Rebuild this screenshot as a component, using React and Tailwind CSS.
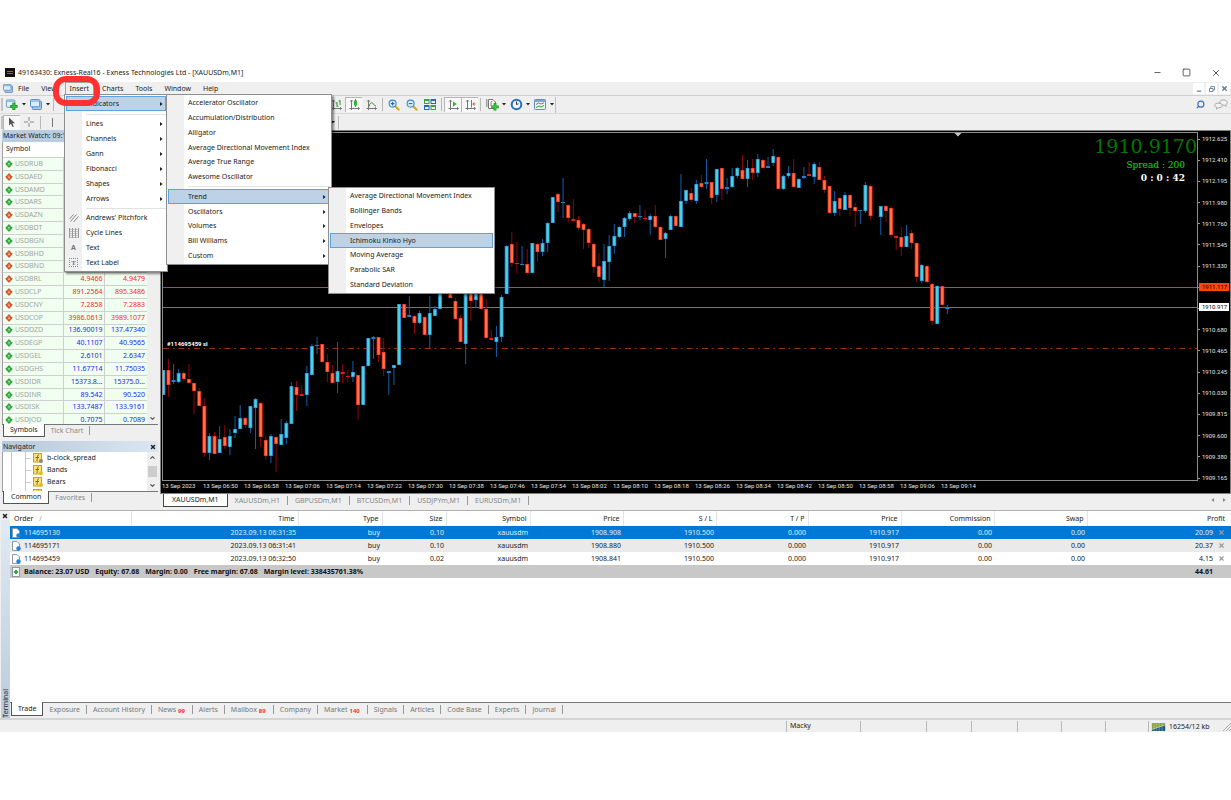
import { Minus, Square, X, Search, ChevronUp, ChevronDown } from 'lucide-react';
import clsx from 'clsx';

// direction, high, body top, body bottom, low
const CANDLES = [
    ['u', 370, 370, 395, 395], ['d', 359, 370, 385, 397], ['u', 364, 380, 382, 384], ['u', 369, 373, 382, 383],
    ['d', 371, 373, 379, 382], ['d', 364, 379, 383, 383], ['d', 383, 383, 391, 414], ['d', 388, 391, 406, 406],
    ['d', 398, 406, 453, 457], ['u', 433, 436, 453, 460], ['d', 432, 436, 454, 454], ['u', 426, 439, 453, 453],
    ['d', 425, 437, 446, 449], ['u', 429, 436, 447, 455], ['u', 416, 429, 433, 438], ['u', 405, 418, 429, 429],
    ['d', 417, 418, 425, 428], ['u', 406, 406, 428, 433], ['u', 398, 399, 408, 449], ['d', 402, 403, 437, 447],
    ['d', 436, 440, 456, 460], ['u', 434, 436, 456, 463], ['d', 436, 437, 444, 472], ['u', 419, 434, 445, 445],
    ['u', 421, 423, 438, 444], ['u', 382, 386, 424, 424], ['d', 381, 387, 395, 411], ['d', 385, 394, 396, 396],
    ['u', 366, 373, 395, 406], ['u', 344, 346, 375, 375], ['u', 337, 345, 346, 354], ['d', 344, 344, 362, 363],
    ['d', 354, 362, 372, 382], ['d', 365, 373, 383, 383], ['u', 342, 371, 382, 393], ['d', 364, 372, 374, 383],
    ['d', 370, 376, 377, 382], ['u', 361, 372, 377, 382], ['d', 375, 375, 405, 420], ['u', 366, 366, 405, 405],
    ['u', 338, 338, 366, 366], ['u', 336, 337, 339, 359], ['d', 337, 337, 355, 362], ['d', 338, 352, 369, 376],
    ['u', 371, 371, 373, 395], ['u', 365, 365, 368, 385], ['u', 304, 304, 365, 365], ['d', 304, 304, 318, 318],
    ['u', 296, 315, 317, 317], ['d', 315, 316, 323, 334], ['u', 311, 313, 323, 324], ['d', 316, 317, 335, 335],
    ['u', 296, 313, 335, 348], ['u', 306, 309, 316, 316], ['u', 285, 285, 309, 309], ['d', 275, 275, 290, 290],
    ['d', 280, 280, 298, 298], ['d', 298, 301, 319, 319], ['d', 315, 318, 342, 342], ['u', 290, 290, 344, 364],
    ['d', 285, 285, 301, 321], ['u', 285, 285, 300, 308], ['d', 285, 285, 309, 310], ['d', 299, 309, 338, 339],
    ['d', 330, 338, 340, 340], ['u', 326, 337, 342, 357], ['u', 295, 297, 337, 342], ['u', 245, 246, 294, 294],
    ['d', 232, 244, 263, 267], ['d', 242, 263, 264, 273], ['u', 246, 264, 265, 265], ['d', 249, 264, 273, 275],
    ['u', 243, 243, 273, 273], ['d', 243, 244, 252, 262], ['u', 239, 243, 252, 256], ['u', 222, 223, 243, 252],
    ['u', 197, 197, 223, 223], ['d', 193, 194, 202, 212], ['u', 178, 202, 203, 218], ['d', 204, 205, 218, 222],
    ['d', 199, 219, 221, 221], ['d', 216, 220, 228, 230], ['d', 223, 224, 230, 249], ['d', 228, 229, 243, 248],
    ['d', 243, 244, 267, 273], ['d', 253, 266, 277, 282], ['u', 244, 261, 280, 287], ['u', 235, 246, 262, 281],
    ['u', 224, 236, 246, 254], ['u', 226, 227, 237, 238], ['u', 217, 218, 227, 237], ['u', 211, 213, 219, 221],
    ['d', 213, 213, 217, 223], ['u', 205, 216, 217, 220], ['d', 210, 218, 219, 221], ['u', 214, 216, 220, 235],
    ['d', 205, 216, 227, 228], ['d', 226, 227, 240, 240], ['u', 232, 233, 239, 258], ['u', 215, 216, 230, 230],
    ['d', 215, 216, 226, 226], ['u', 174, 201, 227, 227], ['u', 190, 190, 201, 204], ['d', 188, 193, 200, 202],
    ['u', 180, 184, 201, 204], ['d', 175, 183, 187, 188], ['u', 159, 182, 184, 189], ['d', 182, 182, 198, 204],
    ['u', 169, 169, 195, 202], ['d', 168, 168, 189, 200], ['u', 178, 187, 189, 194], ['u', 168, 176, 187, 188],
    ['u', 167, 168, 176, 178], ['d', 155, 170, 179, 179], ['u', 160, 168, 179, 187], ['d', 159, 168, 173, 180],
    ['u', 154, 159, 173, 177], ['d', 159, 160, 168, 169], ['u', 157, 166, 168, 168], ['u', 149, 156, 163, 166],
    ['d', 156, 157, 189, 189], ['u', 175, 176, 189, 190], ['u', 166, 173, 176, 178], ['d', 159, 173, 187, 188],
    ['u', 178, 179, 188, 188], ['u', 167, 176, 178, 179], ['d', 162, 174, 176, 176], ['u', 162, 164, 177, 184],
    ['d', 162, 167, 180, 180], ['d', 176, 180, 190, 193], ['d', 186, 186, 213, 214], ['u', 191, 201, 213, 216],
    ['d', 197, 198, 209, 216], ['u', 192, 195, 210, 210], ['d', 194, 195, 208, 216], ['d', 203, 207, 211, 227],
    ['u', 210, 210, 211, 224], ['u', 182, 185, 211, 213], ['d', 185, 186, 216, 220], null,
    ['u', 206, 206, 217, 235], ['d', 205, 206, 211, 222], ['d', 206, 208, 235, 237], ['d', 235, 236, 238, 250],
    ['d', 227, 237, 247, 256], ['u', 225, 236, 247, 247], ['d', 230, 233, 243, 249], ['d', 242, 243, 277, 282],
    ['u', 264, 265, 281, 283], ['d', 265, 266, 282, 283], ['d', 283, 284, 321, 325], ['u', 285, 286, 324, 324],
    ['d', 286, 286, 305, 306], ['u', 305, 307, 309, 314],
];

const SYMBOLS = [
    ['USDRUB', 'up'], ['USDAED', 'down'], ['USDAMD', 'up'], ['USDARS', 'up'], ['USDAZN', 'down'],
    ['USDBDT', 'up'], ['USDBGN', 'up'], ['USDBHD', 'down'], ['USDBND', 'down'],
    ['USDBRL', 'down', '4.9466', '4.9479'],
    ['USDCLP', 'down', '891.2564', '895.3486'],
    ['USDCNY', 'down', '7.2858', '7.2883'],
    ['USDCOP', 'down', '3986.0613', '3989.1077'],
    ['USDDZD', 'up', '136.90019', '137.47340'],
    ['USDEGP', 'up', '40.1107', '40.9565'],
    ['USDGEL', 'up', '2.6101', '2.6347'],
    ['USDGHS', 'up', '11.67714', '11.75035'],
    ['USDIDR', 'up', '15373.8...', '15375.0...'],
    ['USDINR', 'up', '89.542', '90.520'],
    ['USDISK', 'up', '133.7487', '133.9161'],
    ['USDJOD', 'up', '0.7075', '0.7089'],
];

const PRICES = [
    '1912.625', '1912.410', '1912.195', '1911.980', '1911.760', '1911.545', '1911.330', '', '',
    '1910.680', '1910.465', '1910.245', '1910.030', '1909.815', '1909.600', '1909.380', '1909.165',
];

const TIMES = [
    '13 Sep 2023', '13 Sep 06:50', '13 Sep 06:58', '13 Sep 07:06', '13 Sep 07:14', '13 Sep 07:22', '13 Sep 07:30',
    '13 Sep 07:38', '13 Sep 07:46', '13 Sep 07:54', '13 Sep 08:02', '13 Sep 08:10', '13 Sep 08:18', '13 Sep 08:26',
    '13 Sep 08:34', '13 Sep 08:42', '13 Sep 08:50', '13 Sep 08:58', '13 Sep 09:06', '13 Sep 09:14',
];

const ORDERS = [
    ['114695130', '2023.09.13 06:31:35', 'buy', '0.10', 'xauusdm', '1908.908', '1910.500', '0.000', '1910.917', '0.00', '0.00', '20.09'],
    ['114695171', '2023.09.13 06:31:41', 'buy', '0.10', 'xauusdm', '1908.880', '1910.500', '0.000', '1910.917', '0.00', '0.00', '20.37'],
    ['114695459', '2023.09.13 06:32:50', 'buy', '0.02', 'xauusdm', '1908.841', '1910.500', '0.000', '1910.917', '0.00', '0.00', '4.15'],
];

const ORDER_HEADS = ['Time', 'Type', 'Size', 'Symbol', 'Price', 'S / L', 'T / P', 'Price', 'Commission', 'Swap'];

const TERMINAL_TABS = [
    ['Exposure'], ['Account History'], ['News', '99'], ['Alerts'], ['Mailbox', '89'], ['Company'], ['Market', '140'],
    ['Signals'], ['Articles'], ['Code Base'], ['Experts'], ['Journal'],
];

function Arrow({ className }) {
    return (
        <svg className={className} width="3" height="4" viewBox="0 0 3 4">
            <path d="M0 0L2.6 2L0 4Z" fill="currentColor" />
        </svg>
    );
}

function DropMark() {
    return (
        <svg width="4" height="3" viewBox="0 0 4 3" className="mx-px">
            <path d="M0 0H4L2 2.6Z" fill="#222" />
        </svg>
    );
}

function Diamond({ up }) {
    return (
        <svg width="8" height="8" viewBox="0 0 8 8" className="shrink-0">
            <path
                d="M4 .6L5.6 2.3L7.3 4L5.6 5.7L4 7.4L2.4 5.7L.7 4L2.4 2.3Z"
                fill={up ? '#2fb03c' : '#e4562c'}
                stroke={up ? '#1d7a28' : '#a8341a'}
                strokeWidth=".7"
                strokeLinejoin="round"
            />
            <path d={up ? 'M4 2.6L5.2 4H4.4V5.4H3.6V4H2.8Z' : 'M4 5.4L5.2 4H4.4V2.6H3.6V4H2.8Z'} fill={up ? '#a4eba8' : '#ffc0a0'} />
        </svg>
    );
}

function Divider() {
    return <span className="mx-[2px] h-[13px] w-px bg-[#b8b8b8]" />;
}

function Handle() {
    return <span className="ml-px h-[13px] w-[2px] border-x border-[#c4c4c4]" />;
}

function ToolButton({ label, pressed, children }) {
    return (
        <button
            type="button"
            aria-label={label}
            className={clsx(
                'flex h-[15px] items-center justify-center',
                pressed ? 'w-[17px] border-t border-l border-[#b5b5b5] bg-[#f8f8f8]' : 'w-[18px]',
            )}
        >
            {children}
        </button>
    );
}

function Axes({ children }) {
    return (
        <svg width="11" height="12" viewBox="0 0 11 12" fill="none" stroke="#777" strokeWidth="1">
            <path d="M2.5 1V11M.5 9.5H10.5M1.2 2.6L2.5 1L3.8 2.6M9 8.2L10.5 9.5L9 10.8" />
            {children}
        </svg>
    );
}

function Zoomer({ plus }) {
    return (
        <svg width="12" height="12" viewBox="0 0 13 13" fill="none">
            <path d="M7.6 7.6L11.4 11.4" stroke="#d9a520" strokeWidth="2.4" strokeLinecap="round" />
            <circle cx="5" cy="5" r="3.8" fill="#dff0fc" stroke="#3d8fce" strokeWidth="1.2" />
            <path d={plus ? 'M3 5H7M5 3V7' : 'M3 5H7'} stroke="#2468a8" strokeWidth="1.2" />
        </svg>
    );
}

function WindowsIcon({ size = 12 }) {
    return (
        <svg width={size} height={size - 1} viewBox="0 0 13 12">
            <rect x="2.5" y="2.5" width="10" height="9" rx="1" fill="#a9c8e6" stroke="#4d86bd" />
            <rect x=".5" y=".5" width="10" height="8" rx="1" fill="#dceafa" stroke="#4d86bd" />
            <path d="M1 2.2H10" stroke="#7fb0df" strokeWidth="1.4" />
        </svg>
    );
}

function NewChartIcon() {
    return (
        <svg width="12" height="12" viewBox="0 0 13 12">
            <rect x=".5" y=".5" width="9" height="8" rx=".8" fill="#e6f1fb" stroke="#5d92c4" />
            <path d="M1 2H9" stroke="#8ab8e2" strokeWidth="1.4" />
            <path d="M8.5 3.5V11.5M4.5 7.5H12.5" stroke="#178a1e" strokeWidth="3.2" />
            <path d="M8.5 4.2V10.8M5.2 7.5H11.8" stroke="#35c53e" strokeWidth="1.6" />
        </svg>
    );
}

function MenuItem({ label, arrow, active, icon }) {
    return (
        <button
            type="button"
            className={clsx(
                'flex min-h-0 flex-1 items-center text-left whitespace-nowrap',
                active ? 'border border-[#5aa2e2] bg-[#bdd2e4]' : 'border border-transparent',
            )}
        >
            <span className="flex w-[19px] shrink-0 items-center pl-[2px] text-[#777]">{icon}</span>
            <span className="flex-1">{label}</span>
            {arrow && <Arrow className="mr-[2px]" />}
        </button>
    );
}

function MenuRule() {
    return <div className="my-[2px] ml-[20px] h-px bg-[#e2e2e2]" />;
}

const MENU_BOX = 'absolute flex flex-col border border-[#8e8e8e] p-px text-[#222] shadow-[2px_2px_2px_rgba(0,0,0,0.45)]';

function InsertMenu() {
    return (
        <div className={clsx(MENU_BOX, 'top-[28px] left-[64px] h-[178px] w-[104px] bg-linear-to-r from-[#f0f0f0] from-[17px] to-white to-[17px]')}>
            <div className="flex h-[15px] flex-col">
                <MenuItem label="Indicators" arrow active />
            </div>
            <div className="pt-px">
                <MenuRule />
            </div>
            <div className="flex h-[89px] flex-col">
                <MenuItem label="Lines" arrow />
                <MenuItem label="Channels" arrow />
                <MenuItem label="Gann" arrow />
                <MenuItem label="Fibonacci" arrow />
                <MenuItem label="Shapes" arrow />
                <MenuItem label="Arrows" arrow />
            </div>
            <MenuRule />
            <div className="flex flex-1 flex-col">
                <MenuItem
                    label="Andrews' Pitchfork"
                    icon={
                        <svg width="10" height="10" viewBox="0 0 10 10" stroke="#888" fill="none">
                            <path d="M.5 6L4.5 1.5M1.5 8.5L7.5 1.5M4.5 9L9.5 3.5" />
                        </svg>
                    }
                />
                <MenuItem
                    label="Cycle Lines"
                    icon={
                        <svg width="10" height="10" viewBox="0 0 10 10" stroke="#999" fill="none">
                            <path d="M.5 0V10M3.5 0V10M6.5 0V10M9.5 0V10" />
                            <path d="M0 1.5H10M0 3.5H10M0 5.5H10M0 7.5H10M0 9.5H10" strokeWidth=".5" />
                        </svg>
                    }
                />
                <MenuItem label="Text" icon={<span className="w-[9px] text-center font-bold">A</span>} />
                <MenuItem
                    label="Text Label"
                    icon={<span className="flex h-[9px] w-[9px] items-center justify-center border border-dotted border-[#888] font-['Liberation_Serif',serif] font-bold">T</span>}
                />
            </div>
        </div>
    );
}

function IndicatorsMenu() {
    return (
        <div className={clsx(MENU_BOX, 'top-[28px] left-[166px] h-[171px] w-[166px] bg-linear-to-r from-[#f0f0f0] from-[17px] to-white to-[17px]')}>
            <div className="flex h-[89px] flex-col">
                <MenuItem label="Accelerator Oscillator" />
                <MenuItem label="Accumulation/Distribution" />
                <MenuItem label="Alligator" />
                <MenuItem label="Average Directional Movement Index" />
                <MenuItem label="Average True Range" />
                <MenuItem label="Awesome Oscillator" />
            </div>
            <MenuRule />
            <div className="flex h-[74px] flex-col pr-px">
                <MenuItem label="Trend" arrow active />
                <MenuItem label="Oscillators" arrow />
                <MenuItem label="Volumes" arrow />
                <MenuItem label="Bill Williams" arrow />
                <MenuItem label="Custom" arrow />
            </div>
        </div>
    );
}

function TrendMenu() {
    return (
        <div className={clsx(MENU_BOX, 'top-[121px] left-[328px] h-[107px] w-[167px] bg-linear-to-r from-[#f0f0f0] from-[17px] to-white to-[17px]')}>
            <MenuItem label="Average Directional Movement Index" />
            <MenuItem label="Bollinger Bands" />
            <MenuItem label="Envelopes" />
            <MenuItem label="Ichimoku Kinko Hyo" active />
            <MenuItem label="Moving Average" />
            <MenuItem label="Parabolic SAR" />
            <MenuItem label="Standard Deviation" />
        </div>
    );
}

function TitleBar() {
    return (
        <header className="flex h-4 items-center bg-white pb-[3px] pl-[5px] text-[#222]">
            <svg width="10" height="9" viewBox="0 0 10 9" className="mr-[3px]">
                <rect width="10" height="9" fill="#111" />
                <path d="M2 3.5H8M2 5.5H8" stroke="#a89018" strokeWidth=".8" />
            </svg>
            <h1 className="flex-1">49163430: Exness-Real16 - Exness Technologies Ltd - [XAUUSDm,M1]</h1>
            <div className="flex items-center gap-[20px] pr-[10px] text-[#333]">
                <button type="button" aria-label="Minimize"><Minus size={9} strokeWidth={2} /></button>
                <button type="button" aria-label="Maximize"><Square size={9} strokeWidth={2} /></button>
                <button type="button" aria-label="Close"><X size={10} strokeWidth={2} /></button>
            </div>
        </header>
    );
}

function MenuBar() {
    return (
        <nav className="flex h-[14px] items-center gap-3 border-b border-[#d0d0d0] pl-[3px] text-[#222]">
            <span className="-mr-[7px]"><WindowsIcon size={10} /></span>
            <button type="button">File</button>
            <button type="button">View</button>
            <button type="button" className="-mx-[4px] h-[14px] border-x border-t border-[#a0a0a0] px-[4px]">Insert</button>
            <button type="button">Charts</button>
            <button type="button">Tools</button>
            <button type="button">Window</button>
            <button type="button">Help</button>
            <div className="ml-auto flex gap-[2px] pr-[1px] text-[#6a7f95]">
                <button type="button" aria-label="Minimize chart" className="flex h-[11px] w-[11px] items-end justify-center bg-white"><Minus size={6} strokeWidth={5} /></button>
                <button type="button" aria-label="Restore chart" className="flex h-[11px] w-[11px] items-center justify-center bg-white">
                    <svg width="6" height="6" viewBox="0 0 6 6" fill="none" stroke="currentColor" strokeWidth=".9">
                        <path d="M.5 2.5H4V5.5H.5ZM1.8 2.5V.6H5.5V4H4" />
                    </svg>
                </button>
                <button type="button" aria-label="Close chart" className="flex h-[11px] w-[11px] items-center justify-center bg-white"><X size={7} strokeWidth={5} /></button>
            </div>
        </nav>
    );
}

function Toolbars() {
    return (
        <div>
            <div className="flex h-[17px] items-center">
                <Handle />
                <ToolButton label="New chart"><NewChartIcon /></ToolButton>
                <DropMark />
                <ToolButton label="Profiles"><WindowsIcon /></ToolButton>
                <DropMark />
                <Divider />
                <div className="w-[271px]" />
                <ToolButton label="Bar chart">
                    <Axes><path d="M6 3V8M6 4H4.6M6 7H7.4M9 1V6M9 2H7.6" stroke="#2a9a33" /></Axes>
                </ToolButton>
                <ToolButton label="Candlesticks" pressed>
                    <Axes><path d="M6.5 0V8" stroke="#2a9a33" /><rect x="5" y="1.5" width="3" height="5" fill="#30b83a" stroke="none" /></Axes>
                </ToolButton>
                <ToolButton label="Line chart">
                    <Axes><path d="M3 7.5C4 3.5 6 3 7 4.5S8.5 6.5 10 7" stroke="#2a9a33" /></Axes>
                </ToolButton>
                <Divider />
                <ToolButton label="Zoom in"><Zoomer plus /></ToolButton>
                <ToolButton label="Zoom out"><Zoomer /></ToolButton>
                <ToolButton label="Tile windows">
                    <svg width="12" height="11" viewBox="0 0 12 11">
                        <path d="M0 0H5.5V5H0ZM6.5 6H12V11H6.5Z" fill="#3fa047" />
                        <path d="M6.5 0H12V5H6.5ZM0 6H5.5V11H0Z" fill="#2f66b8" />
                        <path d="M1 3H4.5M7.5 3H11M1 9H4.5M7.5 9H11" stroke="#e8f4ff" strokeWidth="1.8" />
                    </svg>
                </ToolButton>
                <Divider />
                <ToolButton label="Auto scroll" pressed>
                    <Axes><path d="M5 2.5L9 5L5 7.5Z" fill="#30b83a" stroke="none" /></Axes>
                </ToolButton>
                <ToolButton label="Chart shift" pressed>
                    <Axes><path d="M6.5 1V8.5" /><path d="M10.5 5H8M9.4 3.5L7.8 5L9.4 6.5" stroke="#c8501e" /></Axes>
                </ToolButton>
                <Divider />
                <ToolButton label="Indicators list">
                    <svg width="13" height="13" viewBox="0 0 13 13" fill="none">
                        <path d="M2.5 1.5H7L9.5 4V10.5H2.5Z" fill="#fff" stroke="#777" />
                        <path d="M.8 1V9M5 8V4.5Q5 3 6.5 3.4" stroke="#777" />
                        <path d="M9 5V12.5M5.3 8.8H12.7" stroke="#17941e" strokeWidth="2.8" />
                        <path d="M9 5.6V12M6 8.8H12" stroke="#3fd048" strokeWidth="1.2" />
                    </svg>
                </ToolButton>
                <DropMark />
                <ToolButton label="Periods">
                    <svg width="13" height="13" viewBox="0 0 13 13" fill="none">
                        <circle cx="6.5" cy="6.5" r="4.8" fill="#eef6fd" stroke="#2a6fb8" strokeWidth="2" />
                        <path d="M6.5 3.5V6.5L8.5 5.8" stroke="#335" />
                    </svg>
                </ToolButton>
                <DropMark />
                <ToolButton label="Templates">
                    <svg width="13" height="11" viewBox="0 0 13 11" fill="none">
                        <rect x=".5" y=".5" width="11" height="10" rx=".8" fill="#eaf3fb" stroke="#5d8fc0" />
                        <path d="M1 2H11" stroke="#5d8fc0" strokeWidth="1.5" />
                        <path d="M2 5.5L4.5 4L7 5L10 3.8" stroke="#c86030" />
                        <path d="M2 8.5L5 7L7 8L10 6.5" stroke="#3a9a48" />
                    </svg>
                </ToolButton>
                <DropMark />
                <span className="h-[16px] w-px bg-[#c0c0c0]" />
                <div className="ml-auto flex items-center gap-[9px] pr-[3px]">
                    <button type="button" aria-label="Search" className="-scale-x-100"><Search size={9} strokeWidth={3} color="#3a6cc8" /></button>
                    <button type="button" aria-label="Chat">
                        <svg width="14" height="11" viewBox="0 0 15 12" fill="#f2f2f2" stroke="#999" strokeWidth=".9">
                            <path d="M10 1C12.6 1 14.3 2.2 14.3 3.9C14.3 5 13.7 5.8 12.8 6.3L13.2 8L11.3 6.8C8 7 6 5.8 6 3.9C6 2.2 7.6 1 10 1Z" />
                            <path d="M4.8 4.5C7.2 4.5 8.8 5.5 8.8 7S7.2 9.6 4.6 9.5L2.6 11L2.9 9.2C1.4 8.7 .6 8 .6 7C.6 5.5 2.3 4.5 4.8 4.5Z" />
                        </svg>
                    </button>
                </div>
            </div>
            <div className="flex h-[17px] items-center border-t border-[#dadada]">
                <Handle />
                <ToolButton label="Cursor" pressed>
                    <svg width="8" height="11" viewBox="0 0 8 11">
                        <path d="M1 .5V8.5L3 6.8L4.5 10L5.8 9.4L4.4 6.3H7Z" fill="#555" />
                    </svg>
                </ToolButton>
                <ToolButton label="Crosshair">
                    <svg width="10" height="10" viewBox="0 0 10 10" stroke="#888">
                        <path d="M5 0V4M5 6V10M0 5H4M6 5H10" />
                    </svg>
                </ToolButton>
                <Divider />
                <ToolButton label="Vertical line"><span className="h-[9px] w-px bg-[#777]" /></ToolButton>
                <div className="w-[269px]" />
                <DropMark />
                <Divider />
            </div>
        </div>
    );
}

function MarketWatch() {
    return (
        <section>
            <h2 className="h-[12px] overflow-hidden bg-[#bacde0] pl-px leading-[12px] whitespace-nowrap text-[#222]">Market Watch: 09:13:17</h2>
            <div className="flex h-[282px] border-l border-[#a0a0a0]">
                <div className="min-w-0 flex-1 overflow-hidden bg-white">
                    <p className="h-[15px] pl-[3px] leading-[14px] text-[#222]">Symbol</p>
                    <table className="h-[269px] w-full table-fixed border-collapse">
                        <colgroup>
                            <col className="w-[60px]" />
                            <col className="w-[41px]" />
                            <col />
                        </colgroup>
                        <tbody>
                            {SYMBOLS.map(([name, dir, bid, ask]) => (
                                <tr key={name} className="border-t border-[#cfcfcf] bg-[#f0fff0] leading-[10px]">
                                    <td className="p-0 pl-[2px]">
                                        <span className="flex items-center gap-[2px] text-[#a4a4a4]">
                                            <Diamond up={dir === 'up'} />
                                            {name}
                                        </span>
                                    </td>
                                    <td className={clsx('border-l border-[#cfcfcf] p-0 pr-px text-right', dir === 'up' ? 'text-[#2222ff]' : 'text-[#ff2222]')}>{bid}</td>
                                    <td className={clsx('border-l border-[#cfcfcf] p-0 pr-[2px] text-right', dir === 'up' ? 'text-[#2222ff]' : 'text-[#ff2222]')}>{ask}</td>
                                </tr>
                            ))}
                        </tbody>
                    </table>
                </div>
                <div className="flex w-[11px] items-end justify-center bg-[#efefef] pb-[2px]">
                    <ChevronDown size={7} strokeWidth={4} color="#555" />
                </div>
            </div>
            <div className="flex h-[17px] items-start border-t border-[#777]">
                <button type="button" className="-mt-px ml-px h-[13px] border-x border-b border-[#555] bg-white px-[6px] leading-[12px] text-[#222]">Symbols</button>
                <button type="button" className="mt-px border-r border-[#999] px-[6px] leading-[9px] text-[#888]">Tick Chart</button>
            </div>
        </section>
    );
}

function Navigator() {
    return (
        <section>
            <div className="flex h-[11px] items-center justify-between bg-linear-to-r from-[#b4c8dc] to-[#dce6f2] pr-[2px] pl-px">
                <h2 className="text-[#222]">Navigator</h2>
                <button type="button" aria-label="Close navigator"><X size={6} strokeWidth={6} color="#222" /></button>
            </div>
            <div className="flex h-[39px] border-l border-[#a0a0a0] bg-white">
                <ul className="min-w-0 flex-1 overflow-hidden">
                    {['b-clock_spread', 'Bands', 'Bears', ''].map((name, i) => (
                        <li key={i} className="flex h-[12px] items-center gap-px text-[#222]">
                            <svg width="43" height="12" viewBox="0 0 43 12" fill="none">
                                <path d="M8.5 0V12M22.5 0V12M22.5 6.5H28" stroke="#c8c8c8" />
                                <rect x="30.5" y="1.5" width="8" height="8.5" fill="#f8e27c" stroke="#c8a020" />
                                <path d="M36 3C34.5 2.5 34.5 4 34 9M32.5 5.5H36" stroke="#8a6a10" />
                                <circle cx="38" cy="9" r="2" fill={i === 0 ? '#888' : '#e8b820'} />
                            </svg>
                            {name}
                        </li>
                    ))}
                </ul>
                <div className="flex w-[11px] flex-col items-center justify-between bg-[#efefef] py-[2px]">
                    <ChevronUp size={7} strokeWidth={4} color="#555" />
                    <span className="h-[11px] w-[9px] bg-[#cdcdcd]" />
                    <ChevronDown size={7} strokeWidth={4} color="#555" />
                </div>
            </div>
            <div className="flex h-[14px] items-start border-t border-[#777]">
                <button type="button" className="-mt-px ml-px h-[13px] border-x border-b border-[#555] bg-white px-[7px] leading-[12px] text-[#222]">Common</button>
                <button type="button" className="mt-px border-r border-[#999] px-[6px] leading-[9px] text-[#888]">Favorites</button>
            </div>
        </section>
    );
}

function Candle({ index, candle }) {
    if (!candle) return null;
    const [dir, high, top, bottom, low] = candle;
    const x = 163.3 + index * 5.125;
    const up = dir === 'u';
    const h = Math.max(bottom - top, 1);
    return (
        <g>
            <rect x={x - 0.5} y={high} width="1" height={low - high} fill={up ? '#155fa8' : '#8e0808'} />
            <rect x={x - 2} y={top} width="4" height={h} fill={up ? '#1f7fd6' : '#e02010'} />
            {h > 2 && <rect x={x - 1.2} y={top + 0.5} width="2.4" height={h - 1} fill={up ? '#50d0d8' : '#ff7448'} />}
        </g>
    );
}

function Chart() {
    return (
        <div className="flex h-[364px] flex-col border border-[#808080] bg-black pt-px pl-px font-['Roboto',sans-serif] text-[6px] leading-[8px] text-[#e4e4e4]">
            <div className="flex h-[349px]">
                <div className="relative min-w-0 flex-1 border border-[#8c8c8c]">
                    <svg className="h-full w-full">
                        <g transform="translate(-163 -133)">
                            <rect x="163" y="287" width="2400" height="1" fill="#c84a10" />
                            <rect x="163" y="307" width="2400" height="1" fill="#757575" />
                            <path d="M163 348.5H2600" stroke="#9c3208" strokeDasharray="6 3.8 1.6 4" />
                            {CANDLES.map((candle, i) => <Candle key={i} index={i} candle={candle} />)}
                            <path d="M954.5 133H961.5L958 136.5Z" fill="#c8c8c8" />
                        </g>
                    </svg>
                    <span className="absolute top-[207px] left-[4px] font-bold text-white">#114695459 sl</span>
                    <div className="absolute top-0 right-0 text-right font-['DejaVu_Serif',serif]">
                        <p className="text-[19px] leading-[26px] text-[#007800]">1910.9170</p>
                        <p className="pr-[12px] text-[9px] leading-[13px] text-[#00e000]">Spread : 200</p>
                        <p className="pr-[12px] text-[9px] leading-[13px] font-bold text-white">0 : 0 : 42</p>
                    </div>
                </div>
                <div className="relative flex w-[32px] flex-col justify-between pt-[3px]">
                    {PRICES.map((price, i) => (
                        <span key={i} className="-mb-[1px] flex h-[8px] items-center gap-[2px]">
                            <span className="h-px w-[2px] bg-[#999]" />
                            {price}
                        </span>
                    ))}
                    <span className="absolute top-[151px] left-px w-[30px] bg-[#ff4500] pl-[3px] text-black">1911.117</span>
                    <span className="absolute top-[171px] left-px w-[30px] bg-white pl-[3px] text-black">1910.917</span>
                </div>
            </div>
            <div className="flex overflow-hidden pt-px whitespace-nowrap">
                {TIMES.map((time) => <span key={time} className="w-[41px] shrink-0">{time}</span>)}
            </div>
        </div>
    );
}

function ChartTabs() {
    return (
        <div className="flex h-[16px] items-start pl-[3px] text-[#888]">
            <button type="button" className="h-[13px] border-x border-b border-[#444] bg-white px-2 leading-[12px] text-[#222]">XAUUSDm,M1</button>
            {['XAUUSDm,H1', 'GBPUSDm,M1', 'BTCUSDm,M1', 'USDJPYm,M1', 'EURUSDm,M1'].map((name) => (
                <button key={name} type="button" className="mt-[2px] border-r border-[#999] px-[7px] leading-[9px]">{name}</button>
            ))}
            <div className="ml-auto flex gap-[9px] pt-[4px] pr-[5px] text-[#888]">
                <Arrow className="rotate-180" />
                <Arrow />
            </div>
        </div>
    );
}

function OrderIcon() {
    return (
        <svg width="9" height="10" viewBox="0 0 9 10" className="shrink-0">
            <path d="M.5 .5H5L7.5 3V9.5H.5Z" fill="#fff" stroke="#8b98a5" />
            <circle cx="6.5" cy="7.5" r="2.2" fill="#1c84d8" />
        </svg>
    );
}

function Terminal() {
    return (
        <section className="flex h-[208px] border-t border-[#b0b0b0]">
            <div className="flex w-[10px] flex-col items-center">
                <button type="button" aria-label="Close terminal" className="h-[9px]"><X size={6} strokeWidth={6} color="#222" /></button>
                <div className="flex w-[9px] flex-1 items-center bg-linear-to-b from-[#e0eaf4] to-[#bccbdb] [writing-mode:vertical-rl]">
                    <h2 className="mt-auto rotate-180 leading-[9px] text-[#222]">Terminal</h2>
                </div>
            </div>
            <div className="flex min-w-0 flex-1 flex-col">
                <div className="flex-1 bg-white">
                    <table className="w-full table-fixed border-collapse text-[#222]">
                        <colgroup>
                            <col className="w-[121px]" />
                            <col className="w-[167px]" />
                            <col className="w-[84px]" />
                            <col className="w-[64px]" />
                            <col className="w-[84px]" />
                            <col className="w-[93px]" />
                            <col className="w-[93px]" />
                            <col className="w-[92px]" />
                            <col className="w-[93px]" />
                            <col className="w-[93px]" />
                            <col className="w-[93px]" />
                            <col />
                        </colgroup>
                        <thead>
                            <tr className="h-[15px]">
                                <th className="border-r border-[#e4e4e4] p-0 pl-1 text-left font-normal">Order <span className="pl-1 text-[#999]">/</span></th>
                                {ORDER_HEADS.map((head, i) => (
                                    <th key={i} className="border-r border-[#e4e4e4] p-0 pr-[3px] text-right font-normal">{head}</th>
                                ))}
                                <th className="p-0 pr-[6px] text-right font-normal">Profit</th>
                            </tr>
                        </thead>
                        <tbody>
                            {ORDERS.map((cells, row) => (
                                <tr key={cells[0]} className={clsx('h-[13px] leading-[12px]', row === 0 && 'bg-[#0078d7] text-[#e0effc]', row === 1 && 'bg-[#eaeaea]')}>
                                    <td className="p-0 pl-[2px]">
                                        <span className="flex items-center gap-[3px]"><OrderIcon />{cells[0]}</span>
                                    </td>
                                    {cells.slice(1, 11).map((cell, i) => <td key={i} className="p-0 pr-[2px] text-right">{cell}</td>)}
                                    <td className="p-0 pr-[6px]">
                                        <span className="flex items-center justify-end gap-[5px]">
                                            {cells[11]}
                                            <button type="button" aria-label="Close order"><X size={7} strokeWidth={4} color="#999" /></button>
                                        </span>
                                    </td>
                                </tr>
                            ))}
                            <tr className="h-[13px] bg-[#c8c8c8] leading-[12px] font-bold text-[#111]">
                                <td colSpan={11} className="p-0 pl-[2px]">
                                    <span className="flex items-center gap-[3px]">
                                        <svg width="9" height="10" viewBox="0 0 9 10" className="shrink-0">
                                            <rect x=".5" y=".5" width="7" height="9" fill="#fff" stroke="#8b98a5" />
                                            <path d="M4 2.5L6.5 5L4 7.5L1.5 5Z" fill="#2fa03a" />
                                        </svg>
                                        <span className="flex gap-[6px]">
                                            <span>Balance: 23.07 USD</span>
                                            <span>Equity: 67.68</span>
                                            <span>Margin: 0.00</span>
                                            <span>Free margin: 67.68</span>
                                            <span>Margin level: 338435761.38%</span>
                                        </span>
                                    </span>
                                </td>
                                <td className="p-0 pr-[18px] text-right">44.61</td>
                            </tr>
                        </tbody>
                    </table>
                </div>
                <div className="flex h-[16px] items-start border-t border-[#777] text-[#777]">
                    <button type="button" className="-mt-px ml-px h-[14px] border-x border-b border-[#555] bg-white px-[6px] leading-[13px] text-[#222]">Trade</button>
                    {TERMINAL_TABS.map(([name, count]) => (
                        <button key={name} type="button" className="mt-[2px] flex border-r border-[#999] px-[6px] leading-[9px]">
                            {name}
                            {count && <span className="mr-px ml-[2px] pt-[4px] text-[6px] leading-[5px] font-bold text-[#ff3030]">{count}</span>}
                        </button>
                    ))}
                </div>
            </div>
        </section>
    );
}

function StatusBar() {
    return (
        <footer className="flex h-[14px] items-end justify-end border-t-2 border-[#d4d4d4] text-[#222]">
            <span className="h-[11px] w-[74px] border-l border-[#b8b8b8] pl-[3px] leading-[9px]">Macky</span>
            <span className="h-[11px] w-[66px] border-l border-[#b8b8b8]" />
            <span className="h-[11px] w-[45px] border-l border-[#b8b8b8]" />
            <span className="h-[11px] w-[46px] border-l border-[#b8b8b8]" />
            <span className="h-[11px] w-[44px] border-l border-[#b8b8b8]" />
            <span className="h-[11px] w-[44px] border-l border-[#b8b8b8]" />
            <span className="h-[11px] w-[43px] border-l border-[#b8b8b8]" />
            <span className="flex h-[11px] w-[83px] items-center gap-[3px] border-l border-[#b8b8b8] pl-[2px]">
                <svg width="15" height="8" viewBox="0 0 15 9">
                    <path d="M0 0H15V2L0 7Z" fill="#8aa83a" />
                    <path d="M0 9V7.5L15 2.5V9Z" fill="#1f5a82" />
                    <path d="M2.5 0V9M5.5 0V9M8.5 0V9M11.5 0V9" stroke="#c8d4c0" strokeWidth=".5" />
                </svg>
                16254/12 kb
                <svg width="8" height="8" viewBox="0 0 8 8" stroke="#aaa" className="ml-auto">
                    <path d="M0 8L8 0M3 8L8 3M6 8L8 6" />
                </svg>
            </span>
        </footer>
    );
}

export default function App() {
    return (
        <main className="min-h-screen bg-white pt-[66px] font-['Noto_Sans',sans-serif] text-[7px] leading-[10px]">
            <div className="relative bg-[#efefef]">
                <TitleBar />
                <MenuBar />
                <Toolbars />
                <div className="flex">
                    <aside className="w-[160px] shrink-0 pr-[2px] pl-[2px]">
                        <MarketWatch />
                        <Navigator />
                    </aside>
                    <div className="min-w-0 flex-1">
                        <Chart />
                        <ChartTabs />
                    </div>
                </div>
                <Terminal />
                <StatusBar />
                <InsertMenu />
                <IndicatorsMenu />
                <TrendMenu />
                <div className="absolute top-[10px] left-[53px] h-[30px] w-[47px] rounded-[13px] border-[6px] border-[#ff3131]" />
            </div>
        </main>
    );
}
